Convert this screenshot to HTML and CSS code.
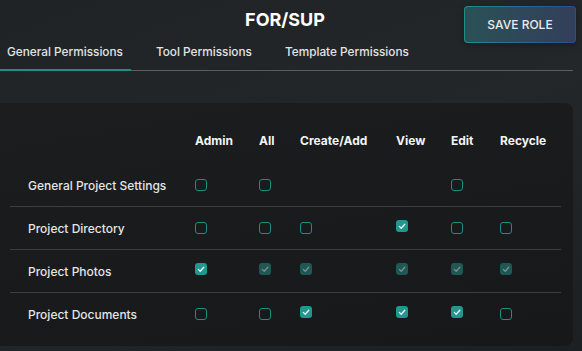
FILE: index.html
```html
<!DOCTYPE html>
<html lang="en">
<head>
  <meta charset="UTF-8">
  <meta name="viewport" content="width=device-width, initial-scale=1">
  <title>Role - FOR/SUP</title>
  <link rel="stylesheet" href="styles.css">
</head>
<body>
  <!-- Cabeçalho com título e botão -->
  <div class="header">
    <div></div>
    <h1 class="title">FOR/SUP</h1>
    <button class="save-btn">SAVE ROLE</button>
  </div>

  <!-- Abas -->
  <div class="tabs">
    <div class="tab active">General Permissions</div>
    <div class="tab">Tool Permissions</div>
    <div class="tab">Template Permissions</div>
  </div>

  <!-- Tabela de permissões -->
  <div class="panel">
    <div class="perm-head">
      <div></div>
      <div>Admin</div>
      <div>All</div>
      <div>Create/Add</div>
      <div>View</div>
      <div>Edit</div>
      <div>Recycle</div>
    </div>

    <div class="perm-row">
      <div class="label">General Project Settings</div>
      <div><span class="box"></span></div>
      <div><span class="box"></span></div>
      <div></div>
      <div></div>
      <div><span class="box"></span></div>
      <div></div>
    </div>

    <div class="perm-row">
      <div class="label">Project Directory</div>
      <div><span class="box"></span></div>
      <div><span class="box"></span></div>
      <div><span class="box"></span></div>
      <div><span class="box checked"><svg viewBox="0 0 12 12"><path d="M3.3 6.4 5.2 8.2 8.8 4.2"/></svg></span></div>
      <div><span class="box"></span></div>
      <div><span class="box"></span></div>
    </div>

    <div class="perm-row">
      <div class="label">Project Photos</div>
      <div><span class="box checked"><svg viewBox="0 0 12 12"><path d="M3.3 6.4 5.2 8.2 8.8 4.2"/></svg></span></div>
      <div><span class="box checked disabled"><svg viewBox="0 0 12 12"><path d="M3.3 6.4 5.2 8.2 8.8 4.2"/></svg></span></div>
      <div><span class="box checked disabled"><svg viewBox="0 0 12 12"><path d="M3.3 6.4 5.2 8.2 8.8 4.2"/></svg></span></div>
      <div><span class="box checked disabled"><svg viewBox="0 0 12 12"><path d="M3.3 6.4 5.2 8.2 8.8 4.2"/></svg></span></div>
      <div><span class="box checked disabled"><svg viewBox="0 0 12 12"><path d="M3.3 6.4 5.2 8.2 8.8 4.2"/></svg></span></div>
      <div><span class="box checked disabled"><svg viewBox="0 0 12 12"><path d="M3.3 6.4 5.2 8.2 8.8 4.2"/></svg></span></div>
    </div>

    <div class="perm-row">
      <div class="label">Project Documents</div>
      <div><span class="box"></span></div>
      <div><span class="box"></span></div>
      <div><span class="box checked"><svg viewBox="0 0 12 12"><path d="M3.3 6.4 5.2 8.2 8.8 4.2"/></svg></span></div>
      <div><span class="box checked"><svg viewBox="0 0 12 12"><path d="M3.3 6.4 5.2 8.2 8.8 4.2"/></svg></span></div>
      <div><span class="box checked"><svg viewBox="0 0 12 12"><path d="M3.3 6.4 5.2 8.2 8.8 4.2"/></svg></span></div>
      <div><span class="box"></span></div>
    </div>
  </div>
</body>
</html>
```

FILE: styles.css
```css
/* Reset básico */
* {
  margin: 0;
  padding: 0;
  box-sizing: border-box;
}
body {
  font-family: 'Inter', 'Noto Sans', sans-serif;
  background: linear-gradient(160deg, #202326, #23272a 50%, #1d2022);
  color: #e6e6e6;
  height: 100vh;
  overflow: hidden;
}
/* Cabeçalho */
.header {
  display: grid;
  grid-template-columns: 1fr auto 1fr;
  align-items: start;
  height: 38px;
}
.title {
  font-size: 18px;
  font-weight: 700;
  color: #fff;
  line-height: 20px;
  padding-top: 10px;
  margin-right: 12px;
}
.save-btn {
  justify-self: end;
  margin: 6px 6px 0 0;
  width: 112px;
  height: 37px;
  font-family: inherit;
  font-size: 12px;
  font-weight: 500;
  color: #e9ecee;
  border: 1px solid transparent;
  border-radius: 4px;
  background:
    linear-gradient(to right, #2a5156, #333f5b) padding-box,
    linear-gradient(to right, #1f8e8b, #2b4c94) border-box;
  box-shadow: 0 2px 6px rgba(0, 0, 0, 0.25);
  cursor: pointer;
}
/* Abas */
.tabs {
  display: flex;
  margin-right: 9px;
  border-bottom: 1px solid #5a5c5e;
}
.tab {
  font-size: 11.8px;
  font-weight: 500;
  line-height: 16px;
  color: #e2e4e5;
  padding: 6px 8px 9px 7px;
  margin-right: 18px;
  margin-bottom: -1px;
  border-bottom: 2px solid transparent;
}
.tab.active {
  border-bottom-color: #1f8e88;
}
/* Painel da tabela */
.panel {
  margin: 32px 9px 0 0;
  padding: 24px 12px 11px 10px;
  border-radius: 0 8px 8px 0;
  background: linear-gradient(170deg, #1b1d1f, #16181a);
}
.perm-head,
.perm-row {
  display: grid;
  grid-template-columns: 185px 64px 41px 96px 55px 49px 1fr;
  align-items: center;
}
.perm-head {
  height: 26px;
  margin-bottom: 11px;
  font-size: 12px;
  font-weight: 700;
  color: #f4f4f4;
}
.perm-row {
  height: 43px;
  border-bottom: 1px solid #3b3d3f;
  font-size: 12px;
  font-weight: 500;
}
.perm-row:last-child {
  border-bottom: none;
  height: 42px;
}
.perm-row > div {
  display: flex;
  align-items: center;
}
.label {
  padding-left: 18px;
  color: #e4e5e6;
}
/* Caixas de seleção */
.box {
  display: block;
  width: 12px;
  height: 12px;
  border: 1.5px solid #1c8e86;
  border-radius: 3px;
}
.box.checked {
  border: none;
  background: #21978f;
  margin-bottom: 4px;
}
.box svg {
  display: block;
  width: 12px;
  height: 12px;
  fill: none;
  stroke: #f2f6f6;
  stroke-width: 1.3;
  stroke-linecap: round;
  stroke-linejoin: round;
}
.box.disabled {
  background: #1d5854;
}
.box.disabled svg {
  stroke: #7d8f8d;
}
```
